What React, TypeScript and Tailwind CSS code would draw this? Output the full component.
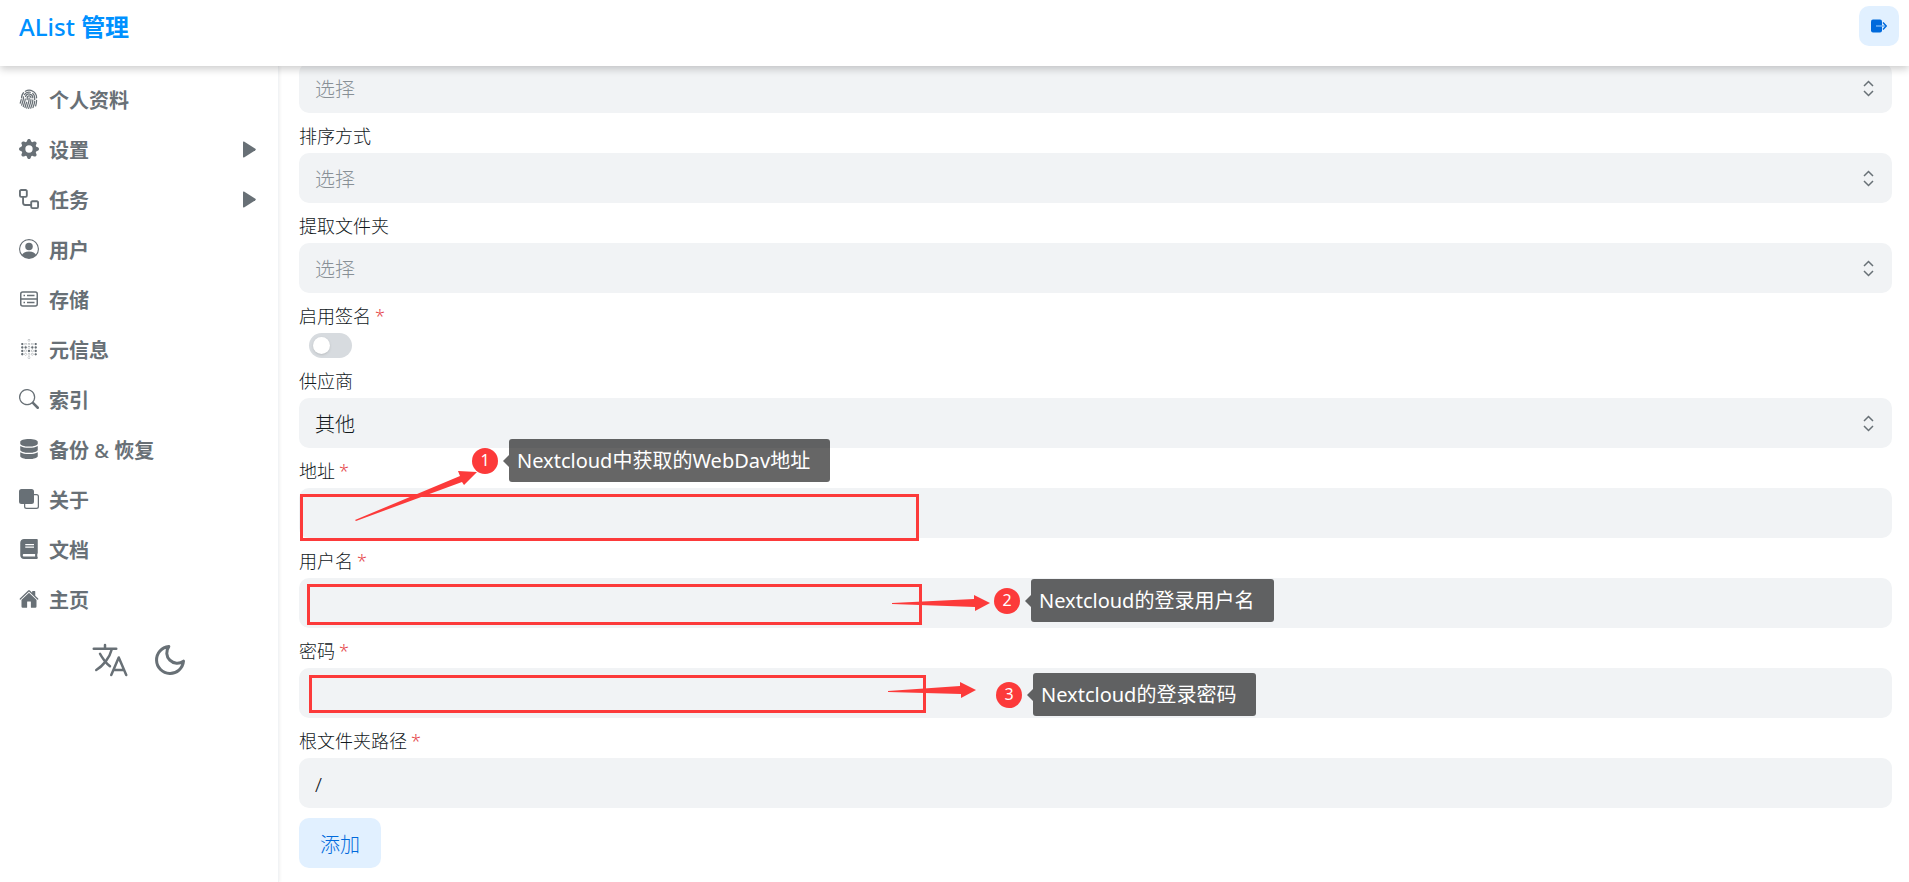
import { useState } from 'react';
import type { ComponentType, ReactNode } from 'react';
import { BsFingerprint, BsFront, BsGearFill, BsPersonCircle, BsSearch } from 'react-icons/bs';
import { FaBook, FaDatabase } from 'react-icons/fa';
import { SiMetabase } from 'react-icons/si';
import { IoHome, IoLanguageOutline } from 'react-icons/io5';
import { FiMoon } from 'react-icons/fi';

interface IconProps {
  className?: string;
}

function WorkflowIcon({ className }: IconProps) {
  return (
    <svg viewBox="0 0 16 16" className={className} fill="currentColor">
      <path d="M0 1.75C0 .784.784 0 1.75 0h3.5C6.216 0 7 .784 7 1.75v3.5A1.75 1.75 0 0 1 5.25 7H4v4a1 1 0 0 0 1 1h4v-1.25C9 9.784 9.784 9 10.75 9h3.5c.966 0 1.75.784 1.75 1.75v3.5A1.75 1.75 0 0 1 14.25 16h-3.5A1.75 1.75 0 0 1 9 14.25v-.75H5A2.5 2.5 0 0 1 2.5 11V7h-.75A1.75 1.75 0 0 1 0 5.25Zm1.75-.25a.25.25 0 0 0-.25.25v3.5c0 .138.112.25.25.25h3.5a.25.25 0 0 0 .25-.25v-3.5a.25.25 0 0 0-.25-.25Zm9 9a.25.25 0 0 0-.25.25v3.5c0 .138.112.25.25.25h3.5a.25.25 0 0 0 .25-.25v-3.5a.25.25 0 0 0-.25-.25Z" />
    </svg>
  );
}

function StorageIcon({ className }: IconProps) {
  return (
    <svg viewBox="0 0 20 20" className={className} fill="none" stroke="currentColor" strokeWidth="1.5">
      <rect x="1.75" y="3" width="16.5" height="14" rx="2" />
      <path d="M2 10h16M4.5 6.5H6M8 6.5h7.5M4.5 13.5H6M8 13.5h7.5" />
    </svg>
  );
}

function LogoutIcon({ className }: IconProps) {
  return (
    <svg viewBox="0 0 16 14" className={className} fill="none" strokeWidth="1.5">
      <rect y="0.5" width="11" height="13" rx="2" fill="currentColor" />
      <path d="M5 7h10" stroke="#6fb0f2" />
      <path d="M12 3.5L15.25 7 12 10.5" stroke="currentColor" />
    </svg>
  );
}

interface MenuItem {
  title: ReactNode;
  icon: ComponentType<IconProps>;
  hasChildren?: boolean;
}

const MENU: MenuItem[] = [
  { title: '个人资料', icon: BsFingerprint },
  { title: '设置', icon: BsGearFill, hasChildren: true },
  { title: '任务', icon: WorkflowIcon, hasChildren: true },
  { title: '用户', icon: BsPersonCircle },
  { title: '存储', icon: StorageIcon },
  { title: '元信息', icon: SiMetabase },
  { title: '索引', icon: BsSearch },
  { title: <>备份 <span className="font-medium">&amp;</span> 恢复</>, icon: FaDatabase },
  { title: '关于', icon: BsFront },
  { title: '文档', icon: FaBook },
  { title: '主页', icon: IoHome },
];

function Header() {
  return (
    <header className="relative z-20 flex h-[66px] shrink-0 items-start justify-between bg-white px-[10px] pt-[6px] shadow-[0_3px_8px_rgba(0,0,0,0.2)]">
      <a href="#" className="pl-[9px] text-[24px] leading-[42px] font-medium text-[#0091ff]">
        AList <span className="font-bold">管理</span>
      </a>
      <button
        aria-label="退出登录"
        className="flex h-10 w-10 items-center justify-center rounded-[10px] bg-[#e1f0ff] text-[#006adc]"
      >
        <LogoutIcon className="h-[14px] w-4" />
      </button>
    </header>
  );
}

function SideMenu() {
  return (
    <aside className="w-[279px] shrink-0 border-r border-[#f1f3f5] pt-2 text-[#687076] shadow-[1px_0_3px_rgba(0,0,0,0.06)]">
      <nav>
        {MENU.map(({ title, icon: Icon, hasChildren }, index) => (
          <a key={index} href="#" className="flex h-[50px] items-center pr-[22px] pl-[19px]">
            <Icon className="h-5 w-5" />
            <span className="ml-[10px] flex-1 pt-[3px] text-[20px] leading-[30px] font-bold">{title}</span>
            {hasChildren && (
              <svg viewBox="0 0 13 17" className="h-[17px] w-[13px]" fill="currentColor">
                <path d="M0 1.2Q0 0 1 .6L12.4 7.8q.8.7 0 1.4L1 16.4q-1 .6-1-.6z" />
              </svg>
            )}
          </a>
        ))}
      </nav>
      <div className="mt-4 flex items-center justify-center gap-[22px]">
        <button aria-label="语言">
          <IoLanguageOutline className="h-10 w-10" />
        </button>
        <button aria-label="切换主题">
          <FiMoon className="h-9 w-9" />
        </button>
      </div>
    </aside>
  );
}

interface FieldProps {
  id: string;
  label?: string;
  required?: boolean;
  children: ReactNode;
}

function Field({ id, label, required, children }: FieldProps) {
  return (
    <div className="pb-[10px]">
      {label && (
        <label htmlFor={id} className="block h-[30px] text-[18px] leading-[26px] text-[#11181c]">
          {label}
          {required && <span className="ml-1 text-[#e5484d]">*</span>}
        </label>
      )}
      {children}
    </div>
  );
}

interface SelectBoxProps {
  id: string;
  value?: string;
  options: string[];
  ariaLabel?: string;
}

function SelectBox({ id, value, options, ariaLabel }: SelectBoxProps) {
  const [selected, setSelected] = useState(value ?? '');

  return (
    <div className="relative">
      <select
        id={id}
        aria-label={ariaLabel}
        value={selected}
        onChange={(e) => setSelected(e.target.value)}
        className={`block h-[50px] w-full appearance-none rounded-[10px] bg-[#f1f3f5] px-4 pt-[3px] text-[20px] ${
          selected ? 'text-[#11181c]' : 'text-[#889096]'
        }`}
      >
        {!value && <option value="">选择</option>}
        {options.map((o) => (
          <option key={o} value={o}>
            {o}
          </option>
        ))}
      </select>
      <svg
        viewBox="0 0 24 24"
        className="pointer-events-none absolute top-[13px] right-3 h-6 w-6 fill-none stroke-[#687076] stroke-[1.5]"
      >
        <path d="M8 10l4.5-4.5L17 10M8 15l4.5 4.5L17 15" />
      </svg>
    </div>
  );
}

function TextBox({ id, type = 'text', value }: { id: string; type?: string; value?: string }) {
  return (
    <input
      id={id}
      type={type}
      defaultValue={value}
      className="block h-[50px] w-full rounded-[10px] bg-[#f1f3f5] px-4 pt-[3px] text-[20px] text-[#11181c]"
    />
  );
}

function Note({ step, text, className }: { step: number; text: string; className: string }) {
  return (
    <div className={`absolute flex items-center font-normal ${className}`}>
      <span className="flex h-[26px] w-[26px] items-center justify-center rounded-full bg-[#fc3a3a] pb-[2px] text-[16px] leading-[20px] text-white">
        {step}
      </span>
      <svg viewBox="0 0 6 12" className="ml-[5px] h-3 w-[6px] fill-black/60">
        <path d="M6 0v12L0 6z" />
      </svg>
      <span className="h-[43px] rounded-[3px] bg-black/60 pr-5 pl-2 text-[20px] leading-[43px] whitespace-nowrap text-white">
        {text}
      </span>
    </div>
  );
}

export default function App() {
  return (
    <div className="flex h-screen flex-col overflow-hidden bg-white font-['Noto_Sans','Noto_Sans_CJK_SC',sans-serif]">
      <Header />
      <div className="flex min-h-0 flex-1">
        <SideMenu />
        <main className="flex min-w-0 flex-1 flex-col justify-end overflow-hidden pr-[17px] pb-[14px] pl-5 font-light">
          <Field id="order_by">
            <SelectBox id="order_by" ariaLabel="排序" options={['名称', '大小', '修改时间']} />
          </Field>
          <Field id="order_direction" label="排序方式">
            <SelectBox id="order_direction" options={['升序', '降序']} />
          </Field>
          <Field id="extract_folder" label="提取文件夹">
            <SelectBox id="extract_folder" options={['提取到最前', '提取到最后']} />
          </Field>
          <Field id="enable_sign" label="启用签名" required>
            <span className="relative ml-[10px] block h-[25px] w-[43px]">
              <input
                id="enable_sign"
                type="checkbox"
                className="peer block h-full w-full appearance-none rounded-full bg-[#d7dbdf] checked:bg-[#0091ff]"
              />
              <span className="pointer-events-none absolute top-1 left-1 h-[17px] w-[17px] rounded-full bg-white shadow-sm peer-checked:left-[22px]" />
            </span>
          </Field>
          <Field id="vendor" label="供应商">
            <SelectBox id="vendor" value="其他" options={['SharePoint', '其他']} />
          </Field>
          <Field id="address" label="地址" required>
            <div className="relative">
              <TextBox id="address" />
              <div className="pointer-events-none absolute top-[6px] left-[1px] h-[47px] w-[619px] border-3 border-[#fc3a3a]" />
              <svg viewBox="0 0 124 50" className="pointer-events-none absolute -top-[17px] left-[55px] h-[50px] w-[124px] fill-[#fc3a3a]">
                <path d="M1 49L106 5L104 0L123 1L110 14L108 11L2 50z" />
              </svg>
              <Note step={1} text="Nextcloud中获取的WebDav地址" className="-top-[49px] left-[173px]" />
            </div>
          </Field>
          <Field id="username" label="用户名" required>
            <div className="relative">
              <TextBox id="username" />
              <div className="pointer-events-none absolute top-[6px] left-2 h-[41px] w-[615px] border-3 border-[#fc3a3a]" />
              <svg viewBox="0 0 98 16" className="pointer-events-none absolute top-[17px] left-[593px] h-4 w-[98px] fill-[#fc3a3a]">
                <path d="M0 8L82 4V0L98 8L83 16V12L0 9z" />
              </svg>
              <Note step={2} text="Nextcloud的登录用户名" className="top-[1px] left-[695px]" />
            </div>
          </Field>
          <Field id="password" label="密码" required>
            <div className="relative">
              <TextBox id="password" type="password" />
              <div className="pointer-events-none absolute top-[7px] left-[10px] h-[38px] w-[617px] border-3 border-[#fc3a3a]" />
              <svg viewBox="0 0 88 16" className="pointer-events-none absolute top-[14px] left-[589px] h-4 w-[88px] fill-[#fc3a3a]">
                <path d="M0 9L72 4V0L88 8L73 16V12L0 10z" />
              </svg>
              <Note step={3} text="Nextcloud的登录密码" className="top-[5px] left-[697px]" />
            </div>
          </Field>
          <Field id="root_folder_path" label="根文件夹路径" required>
            <TextBox id="root_folder_path" value="/" />
          </Field>
          <button className="h-[50px] w-[82px] shrink-0 rounded-[10px] bg-[#e1f0ff] pt-[3px] text-[20px] text-[#006adc]">
            添加
          </button>
        </main>
      </div>
    </div>
  );
}
